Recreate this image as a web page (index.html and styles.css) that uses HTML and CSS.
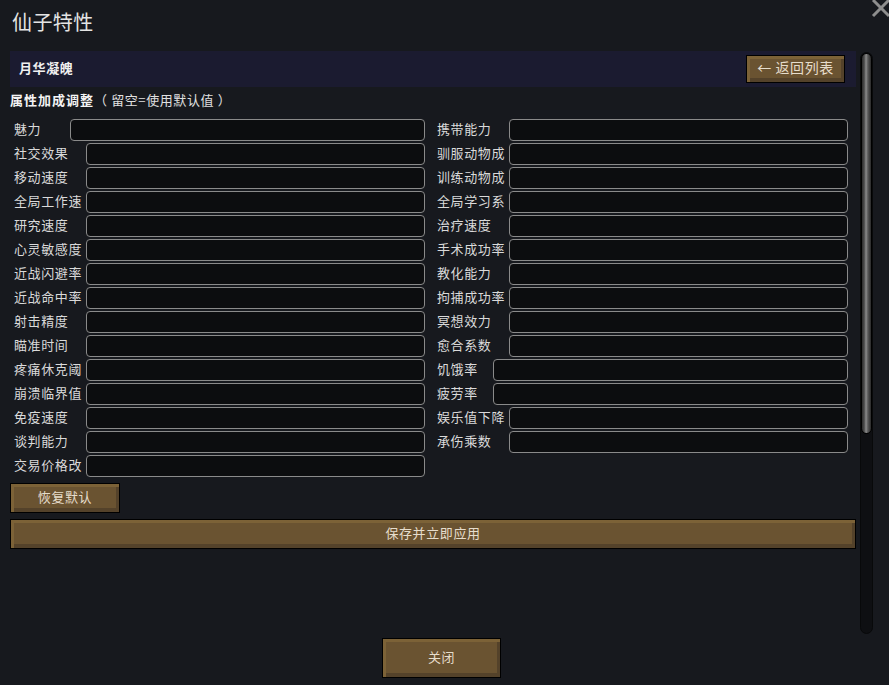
FILE: index.html
```html
<!DOCTYPE html>
<html lang="zh-CN">
<head>
    <meta charset="UTF-8">
    <meta name="viewport" content="width=device-width, initial-scale=1.0">
    <title>仙子特性</title>
    <link rel="stylesheet" href="styles.css">
</head>
<body>

<div class="window">
    <div class="title">仙子特性</div>
    <svg class="close-x" width="22" height="22" viewBox="0 0 22 22">
        <path d="M3 3 L19 19 M19 3 L3 19" stroke="#8e8e8e" stroke-width="3" fill="none"/>
    </svg>

    <div class="body">
        <div class="main">
            <div class="header">
                <span class="header-name">月华凝魄</span>
                <button class="btn btn-back">← 返回列表</button>
            </div>

            <div class="subhead"><b>属性加成调整</b>（ 留空=使用默认值 ）</div>

            <div class="grid">
                <div class="field"><span class="label short">魅力</span><input type="text"></div>
                <div class="field"><span class="label">携带能力</span><input type="text"></div>
                <div class="field"><span class="label">社交效果</span><input type="text"></div>
                <div class="field"><span class="label">驯服动物成</span><input type="text"></div>
                <div class="field"><span class="label">移动速度</span><input type="text"></div>
                <div class="field"><span class="label">训练动物成</span><input type="text"></div>
                <div class="field"><span class="label">全局工作速</span><input type="text"></div>
                <div class="field"><span class="label">全局学习系</span><input type="text"></div>
                <div class="field"><span class="label">研究速度</span><input type="text"></div>
                <div class="field"><span class="label">治疗速度</span><input type="text"></div>
                <div class="field"><span class="label">心灵敏感度</span><input type="text"></div>
                <div class="field"><span class="label">手术成功率</span><input type="text"></div>
                <div class="field"><span class="label">近战闪避率</span><input type="text"></div>
                <div class="field"><span class="label">教化能力</span><input type="text"></div>
                <div class="field"><span class="label">近战命中率</span><input type="text"></div>
                <div class="field"><span class="label">拘捕成功率</span><input type="text"></div>
                <div class="field"><span class="label">射击精度</span><input type="text"></div>
                <div class="field"><span class="label">冥想效力</span><input type="text"></div>
                <div class="field"><span class="label">瞄准时间</span><input type="text"></div>
                <div class="field"><span class="label">愈合系数</span><input type="text"></div>
                <div class="field"><span class="label">疼痛休克阈</span><input type="text"></div>
                <div class="field"><span class="label short">饥饿率</span><input type="text"></div>
                <div class="field"><span class="label">崩溃临界值</span><input type="text"></div>
                <div class="field"><span class="label short">疲劳率</span><input type="text"></div>
                <div class="field"><span class="label">免疫速度</span><input type="text"></div>
                <div class="field"><span class="label">娱乐值下降</span><input type="text"></div>
                <div class="field"><span class="label">谈判能力</span><input type="text"></div>
                <div class="field"><span class="label">承伤乘数</span><input type="text"></div>
                <div class="field"><span class="label">交易价格改</span><input type="text"></div>
            </div>

            <button class="btn btn-reset">恢复默认</button>
            <button class="btn btn-save">保存并立即应用</button>
        </div>

        <div class="scrollbar">
            <div class="thumb"></div>
        </div>
    </div>

    <div class="footer">
        <button class="btn btn-close">关闭</button>
    </div>
</div>

</body>
</html>
```

FILE: styles.css
```css
body {
    margin: 0;
    background-color: #17191e;
    color: #dcdcdc;
    font-family: "Noto Sans CJK SC", "Noto Sans", sans-serif;
    font-size: 13px;
    overflow: hidden;
}
.window {
    position: relative;
    width: 889px;
    height: 685px;
    padding: 0 10px;
    box-sizing: border-box;
}
.title {
    height: 51px;
    padding: 7px 0 0 2px;
    box-sizing: border-box;
    font-size: 20px;
    line-height: 30px;
    letter-spacing: 0.4px;
    color: #e4e4e4;
}
.close-x {
    position: absolute;
    top: -3px;
    right: -3px;
}
.body {
    display: flex;
    gap: 4px;
}
.main {
    width: 846px;
}
.header {
    height: 36px;
    background-color: #1b1b30;
    display: flex;
    align-items: center;
    justify-content: space-between;
    padding: 0 11px 1px 9px;
    box-sizing: border-box;
}
.header-name {
    font-weight: bold;
    color: #f0f0f0;
    font-size: 13px;
    letter-spacing: 0.6px;
    padding-bottom: 3px;
}
.subhead {
    line-height: 18px;
    padding-top: 4px;
    margin-bottom: 10px;
    color: #e0e0e0;
    letter-spacing: 0.6px;
}
.subhead b {
    color: #f4f4f4;
    letter-spacing: 1px;
}
.grid {
    display: grid;
    grid-template-columns: 415px 415px;
    column-gap: 8px;
    row-gap: 2px;
}
.field {
    display: flex;
    height: 22px;
    padding-left: 4px;
}
.label {
    width: 72px;
    flex-shrink: 0;
    line-height: 19px;
    white-space: nowrap;
    letter-spacing: 0.6px;
    color: #dadada;
}
.label.short {
    width: 56px;
}
.field input {
    flex: 1;
    min-width: 0;
    height: 22px;
    box-sizing: border-box;
    margin: 0;
    padding: 0 4px;
    border: 1px solid #8a8a8a;
    border-radius: 4px;
    background-color: #0c0d0f;
    color: #e0e0e0;
    font: inherit;
    outline: none;
}
.btn {
    display: block;
    box-sizing: border-box;
    border: 1px solid #000;
    background-color: #6a5331;
    box-shadow: inset 3px 3px 0 #7c6237, inset -3px -4px 0 #54422a;
    color: #e6ddcc;
    font-family: inherit;
    font-size: 13px;
    letter-spacing: 0.6px;
    padding: 0 0 4px;
    cursor: pointer;
}
.btn-back {
    width: 99px;
    height: 28px;
    font-size: 14px;
}
.btn-reset {
    width: 110px;
    height: 30px;
    margin-top: 6px;
}
.btn-save {
    width: 846px;
    height: 30px;
    margin-top: 6px;
}
.scrollbar {
    width: 13px;
    height: 582px;
    margin-top: 1px;
    background-color: #0e0f12;
    border: 1px solid #08090a;
    border-radius: 7px;
    box-sizing: border-box;
    overflow: hidden;
}
.thumb {
    height: 381px;
    border-radius: 6px;
    border: 1px solid #000;
    box-sizing: border-box;
    background: linear-gradient(to right, #2c2c2c 0%, #4c4c4c 25%, #8c8c8c 45%, #5a5a5a 65%, #2a2a2a 100%);
}
.footer {
    display: flex;
    justify-content: center;
    padding-right: 6px;
    margin-top: 4px;
}
.btn-close {
    width: 119px;
    height: 40px;
}
```
